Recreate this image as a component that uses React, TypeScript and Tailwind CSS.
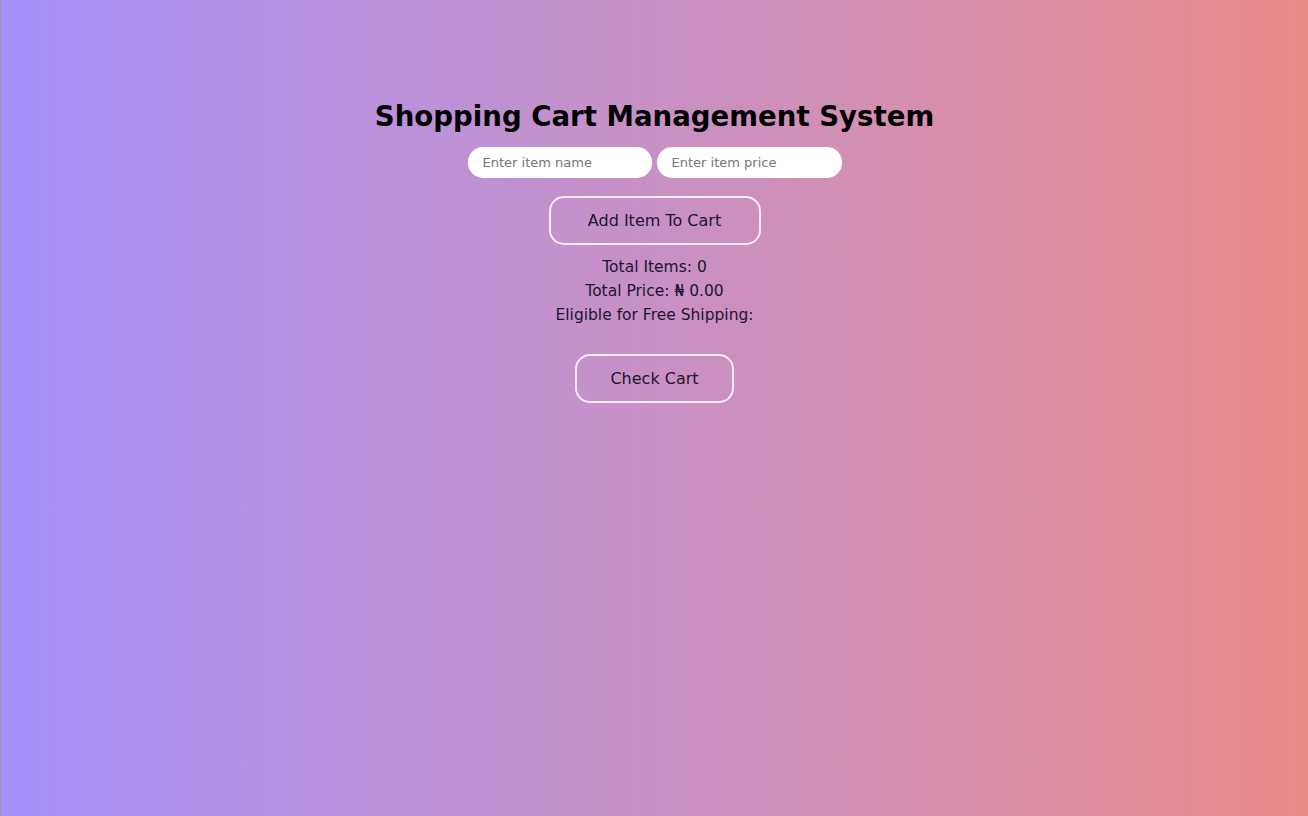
export default function App() {
  return (
    <div className="min-h-[816px] w-full border-l border-[#9a9a9a] bg-gradient-to-r from-[#a590fa] to-[#ea8a8a] font-['Comic_Sans_MS','DejaVu_Sans',sans-serif] text-[#1c1530]">
      <div className="flex flex-col items-center pt-[96px]">
        <h1 className="text-[27.6px] font-bold leading-[42px] text-black">
          Shopping Cart Management System
        </h1>
        <div className="mt-[9px] flex gap-[5px]">
          <input
            className="h-[31px] w-[184px] rounded-[15px] bg-white px-[15px] text-[13px] outline-none placeholder:text-[#757575]"
            placeholder="Enter item name"
            type="text"
          />
          <input
            className="h-[31px] w-[185px] rounded-[15px] bg-white px-[15px] text-[13px] outline-none placeholder:text-[#757575]"
            placeholder="Enter item price"
            type="text"
          />
        </div>
        <button
          className="mt-[18px] h-[49px] w-[212px] rounded-[15px] border-2 border-[#fbeefa] text-[16px]"
          type="button"
        >
          Add Item To Cart
        </button>
        <div className="mt-[10px] flex flex-col items-center text-[15.5px] leading-[24px]">
          <p>Total Items: 0</p>
          <p>Total Price: ₦ 0.00</p>
          <p>Eligible for Free Shipping:</p>
        </div>
        <button
          className="mt-[27px] h-[49px] w-[159px] rounded-[15px] border-2 border-[#fbeefa] text-[16px]"
          type="button"
        >
          Check Cart
        </button>
      </div>
    </div>
  );
}
